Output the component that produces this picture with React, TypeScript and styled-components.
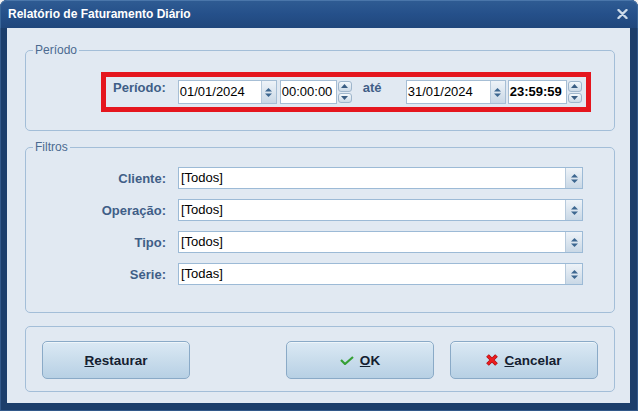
import React from "react";
import styled, { createGlobalStyle } from "styled-components";

const Global = createGlobalStyle`
  html, body { margin: 0; padding: 0; background: #f0f0f0; }
  body { font-family: "Liberation Sans", Arial, sans-serif; }
  #root { width: 638px; height: 411px; }
`;

const Window = styled.div`
  width: 638px;
  height: 411px;
  box-sizing: border-box;
  background: #1c3e6b;
  border-radius: 7px 7px 0 0;
  display: flex;
  flex-direction: column;
  overflow: hidden;
  box-shadow: inset 0 0 0 1px #33598a;
`;

const TitleBar = styled.div`
  height: 28px;
  flex: none;
  display: flex;
  align-items: center;
  justify-content: space-between;
  padding: 0 10px 0 8px;
  background: linear-gradient(#2f5c93, #25508a 50%, #20477c);
  border-radius: 7px 7px 0 0;
  box-shadow: inset 0 1px 0 #4a76aa, inset 1px 0 0 #3a6699, inset -1px 0 0 #3a6699;
`;

const Title = styled.span`
  color: #ffffff;
  font-weight: bold;
  font-size: 12px;
  line-height: 14px;
`;

const CloseGlyph = styled.svg`
  width: 11px;
  height: 10px;
  display: block;
`;

const Client = styled.div`
  flex: 1;
  margin: 0 8px 8px 7px;
  background: #e1e9f2;
  display: flex;
  flex-direction: column;
  padding: 15px 15px 0 18px;
`;

const Group = styled.fieldset`
  margin: 0;
  padding: 0;
  min-width: 0;
  box-sizing: border-box;
  border: 1px solid #a3bed8;
  border-radius: 5px;
`;

const PeriodGroup = styled(Group)`
  height: 88px;
`;

const FilterGroup = styled(Group)`
  height: 173px;
  margin-top: 9px;
`;

const Legend = styled.legend`
  margin-left: 7px;
  padding: 0 2px;
  font-size: 12px;
  line-height: 14px;
  color: #4b6a90;
`;

const Highlight = styled.div`
  margin: 15px 0 0 75px;
  width: 490px;
  height: 40px;
  box-sizing: border-box;
  border: 5px solid #e5161e;
  display: flex;
  align-items: flex-start;
  padding: 3px 0 0 7px;
`;

const FieldLabel = styled.span`
  font-weight: bold;
  font-size: 13px;
  line-height: 15px;
  color: #3f5e87;
  white-space: nowrap;
`;

const PeriodLabel = styled(FieldLabel)`
  margin-right: 12px;
`;

const Connector = styled(FieldLabel)`
  width: 43px;
  margin-left: 11px;
`;

const DateBox = styled.div<{ $w: number }>`
  width: ${(p) => p.$w}px;
  height: 24px;
  box-sizing: border-box;
  display: flex;
  border: 1px solid #a6bed5;
  background: #ffffff;
`;

const ValueText = styled.div<{ $bold?: boolean }>`
  flex: 1;
  font-size: 13px;
  line-height: 22px;
  padding-left: 1px;
  color: #000000;
  font-weight: ${(p) => (p.$bold ? "bold" : "normal")};
  white-space: nowrap;
  overflow: hidden;
`;

const ComboButton = styled.div<{ $w: number }>`
  width: ${(p) => p.$w}px;
  flex: none;
  border-left: 1px solid #b7cadc;
  background: linear-gradient(#eef3f8, #c9d8e6);
  display: flex;
  align-items: center;
  justify-content: center;
`;

const TimeBox = styled.div<{ $w: number; $ml: number }>`
  width: ${(p) => p.$w}px;
  margin-left: ${(p) => p.$ml}px;
  height: 24px;
  display: flex;
`;

const TimeText = styled(ValueText)`
  box-sizing: border-box;
  border: 1px solid #a6bed5;
  background: #ffffff;
`;

const StepColumn = styled.div`
  width: 15px;
  flex: none;
  display: flex;
  flex-direction: column;
  gap: 1px;
  padding: 1px 0 1px 1px;
  box-sizing: border-box;
`;

const StepButton = styled.div`
  flex: 1;
  box-sizing: border-box;
  border: 1px solid #9fb6cc;
  border-radius: 3px;
  background: linear-gradient(#f4f8fb, #ccdae7);
  display: flex;
  align-items: center;
  justify-content: center;
`;

const FilterGrid = styled.div`
  display: grid;
  grid-template-columns: 140px 1fr;
  column-gap: 12px;
  row-gap: 10px;
  padding: 13px 31px 0 0;
`;

const RowLabel = styled(FieldLabel)`
  text-align: right;
  align-self: center;
`;

const Combo = styled.div`
  height: 22px;
  box-sizing: border-box;
  display: flex;
  border: 1px solid #9cbad6;
  background: #ffffff;
`;

const ComboText = styled(ValueText)`
  line-height: 20px;
  padding-left: 2px;
`;

const ButtonBar = styled.div`
  margin-top: 13px;
  height: 66px;
  box-sizing: border-box;
  border: 1px solid #a3bed8;
  border-radius: 5px;
  display: flex;
  justify-content: space-between;
  align-items: flex-start;
  padding: 14px 16px 0 16px;
`;

const ButtonGroup = styled.div`
  display: flex;
  gap: 16px;
`;

const Button = styled.button`
  width: 148px;
  height: 38px;
  box-sizing: border-box;
  border: 1px solid #8aaac7;
  border-radius: 5px;
  background: linear-gradient(#dbe9f4, #b7d0e4);
  font-family: "Liberation Sans", Arial, sans-serif;
  font-weight: bold;
  font-size: 13.5px;
  color: #142030;
  display: flex;
  align-items: center;
  justify-content: center;
  gap: 6px;
  padding: 0;
  box-shadow: inset 0 1px 0 #eef5fa;
`;

const Icon = styled.svg`
  display: block;
  flex: none;
`;

const SpinArrows = () => (
  <Icon width="7" height="9" viewBox="0 0 7 9">
    <polygon points="0,3.5 3.5,0 7,3.5" fill="#3d6790" />
    <polygon points="0,5.5 7,5.5 3.5,9" fill="#3d6790" />
  </Icon>
);

const StepArrow = ({ down }: { down?: boolean }) => (
  <Icon width="7" height="4" viewBox="0 0 7 4">
    <polygon points={down ? "0,0 7,0 3.5,4" : "0,4 3.5,0 7,4"} fill="#3a5d82" />
  </Icon>
);

const DateField = ({ value, w }: { value: string; w: number }) => (
  <DateBox $w={w}>
    <ValueText>{value}</ValueText>
    <ComboButton $w={14}>
      <SpinArrows />
    </ComboButton>
  </DateBox>
);

const TimeField = ({ value, w, ml, bold }: { value: string; w: number; ml: number; bold?: boolean }) => (
  <TimeBox $w={w} $ml={ml}>
    <TimeText $bold={bold}>{value}</TimeText>
    <StepColumn>
      <StepButton>
        <StepArrow />
      </StepButton>
      <StepButton>
        <StepArrow down />
      </StepButton>
    </StepColumn>
  </TimeBox>
);

const filters = [
  { label: "Cliente:", value: "[Todos]" },
  { label: "Operação:", value: "[Todos]" },
  { label: "Tipo:", value: "[Todos]" },
  { label: "Série:", value: "[Todas]" },
];

export default function App() {
  return (
    <>
      <Global />
      <Window>
        <TitleBar>
          <Title>Relatório de Faturamento Diário</Title>
          <CloseGlyph viewBox="0 0 11 10">
            <path d="M1.5 1 L9.5 9 M9.5 1 L1.5 9" stroke="#cddbea" strokeWidth="2.4" strokeLinecap="round" />
          </CloseGlyph>
        </TitleBar>
        <Client>
          <PeriodGroup>
            <Legend>Período</Legend>
            <Highlight>
              <PeriodLabel>Período:</PeriodLabel>
              <DateField value="01/01/2024" w={99} />
              <TimeField value="00:00:00" w={72} ml={3} />
              <Connector>até</Connector>
              <DateField value="31/01/2024" w={100} />
              <TimeField value="23:59:59" w={74} ml={2} bold />
            </Highlight>
          </PeriodGroup>
          <FilterGroup>
            <Legend>Filtros</Legend>
            <FilterGrid>
              {filters.map((f) => (
                <React.Fragment key={f.label}>
                  <RowLabel>{f.label}</RowLabel>
                  <Combo>
                    <ComboText>{f.value}</ComboText>
                    <ComboButton $w={16}>
                      <SpinArrows />
                    </ComboButton>
                  </Combo>
                </React.Fragment>
              ))}
            </FilterGrid>
          </FilterGroup>
          <ButtonBar>
            <Button>
              <span>
                <u>R</u>estaurar
              </span>
            </Button>
            <ButtonGroup>
              <Button>
                <Icon width="14" height="9" viewBox="0 0 14 9">
                  <path d="M1 4 L5 8 L13 1" fill="none" stroke="#35a035" strokeWidth="2.2" />
                </Icon>
                <span>
                  <u>O</u>K
                </span>
              </Button>
              <Button>
                <Icon width="12" height="12" viewBox="0 0 12 12">
                  <path d="M1.5 1.5 L10.5 10.5 M10.5 1.5 L1.5 10.5" stroke="#a80d10" strokeWidth="3.8" />
                  <path d="M1.8 1.8 L10.2 10.2 M10.2 1.8 L1.8 10.2" stroke="#ec1c1f" strokeWidth="2.4" />
                </Icon>
                <span>
                  <u>C</u>ancelar
                </span>
              </Button>
            </ButtonGroup>
          </ButtonBar>
        </Client>
      </Window>
    </>
  );
}
